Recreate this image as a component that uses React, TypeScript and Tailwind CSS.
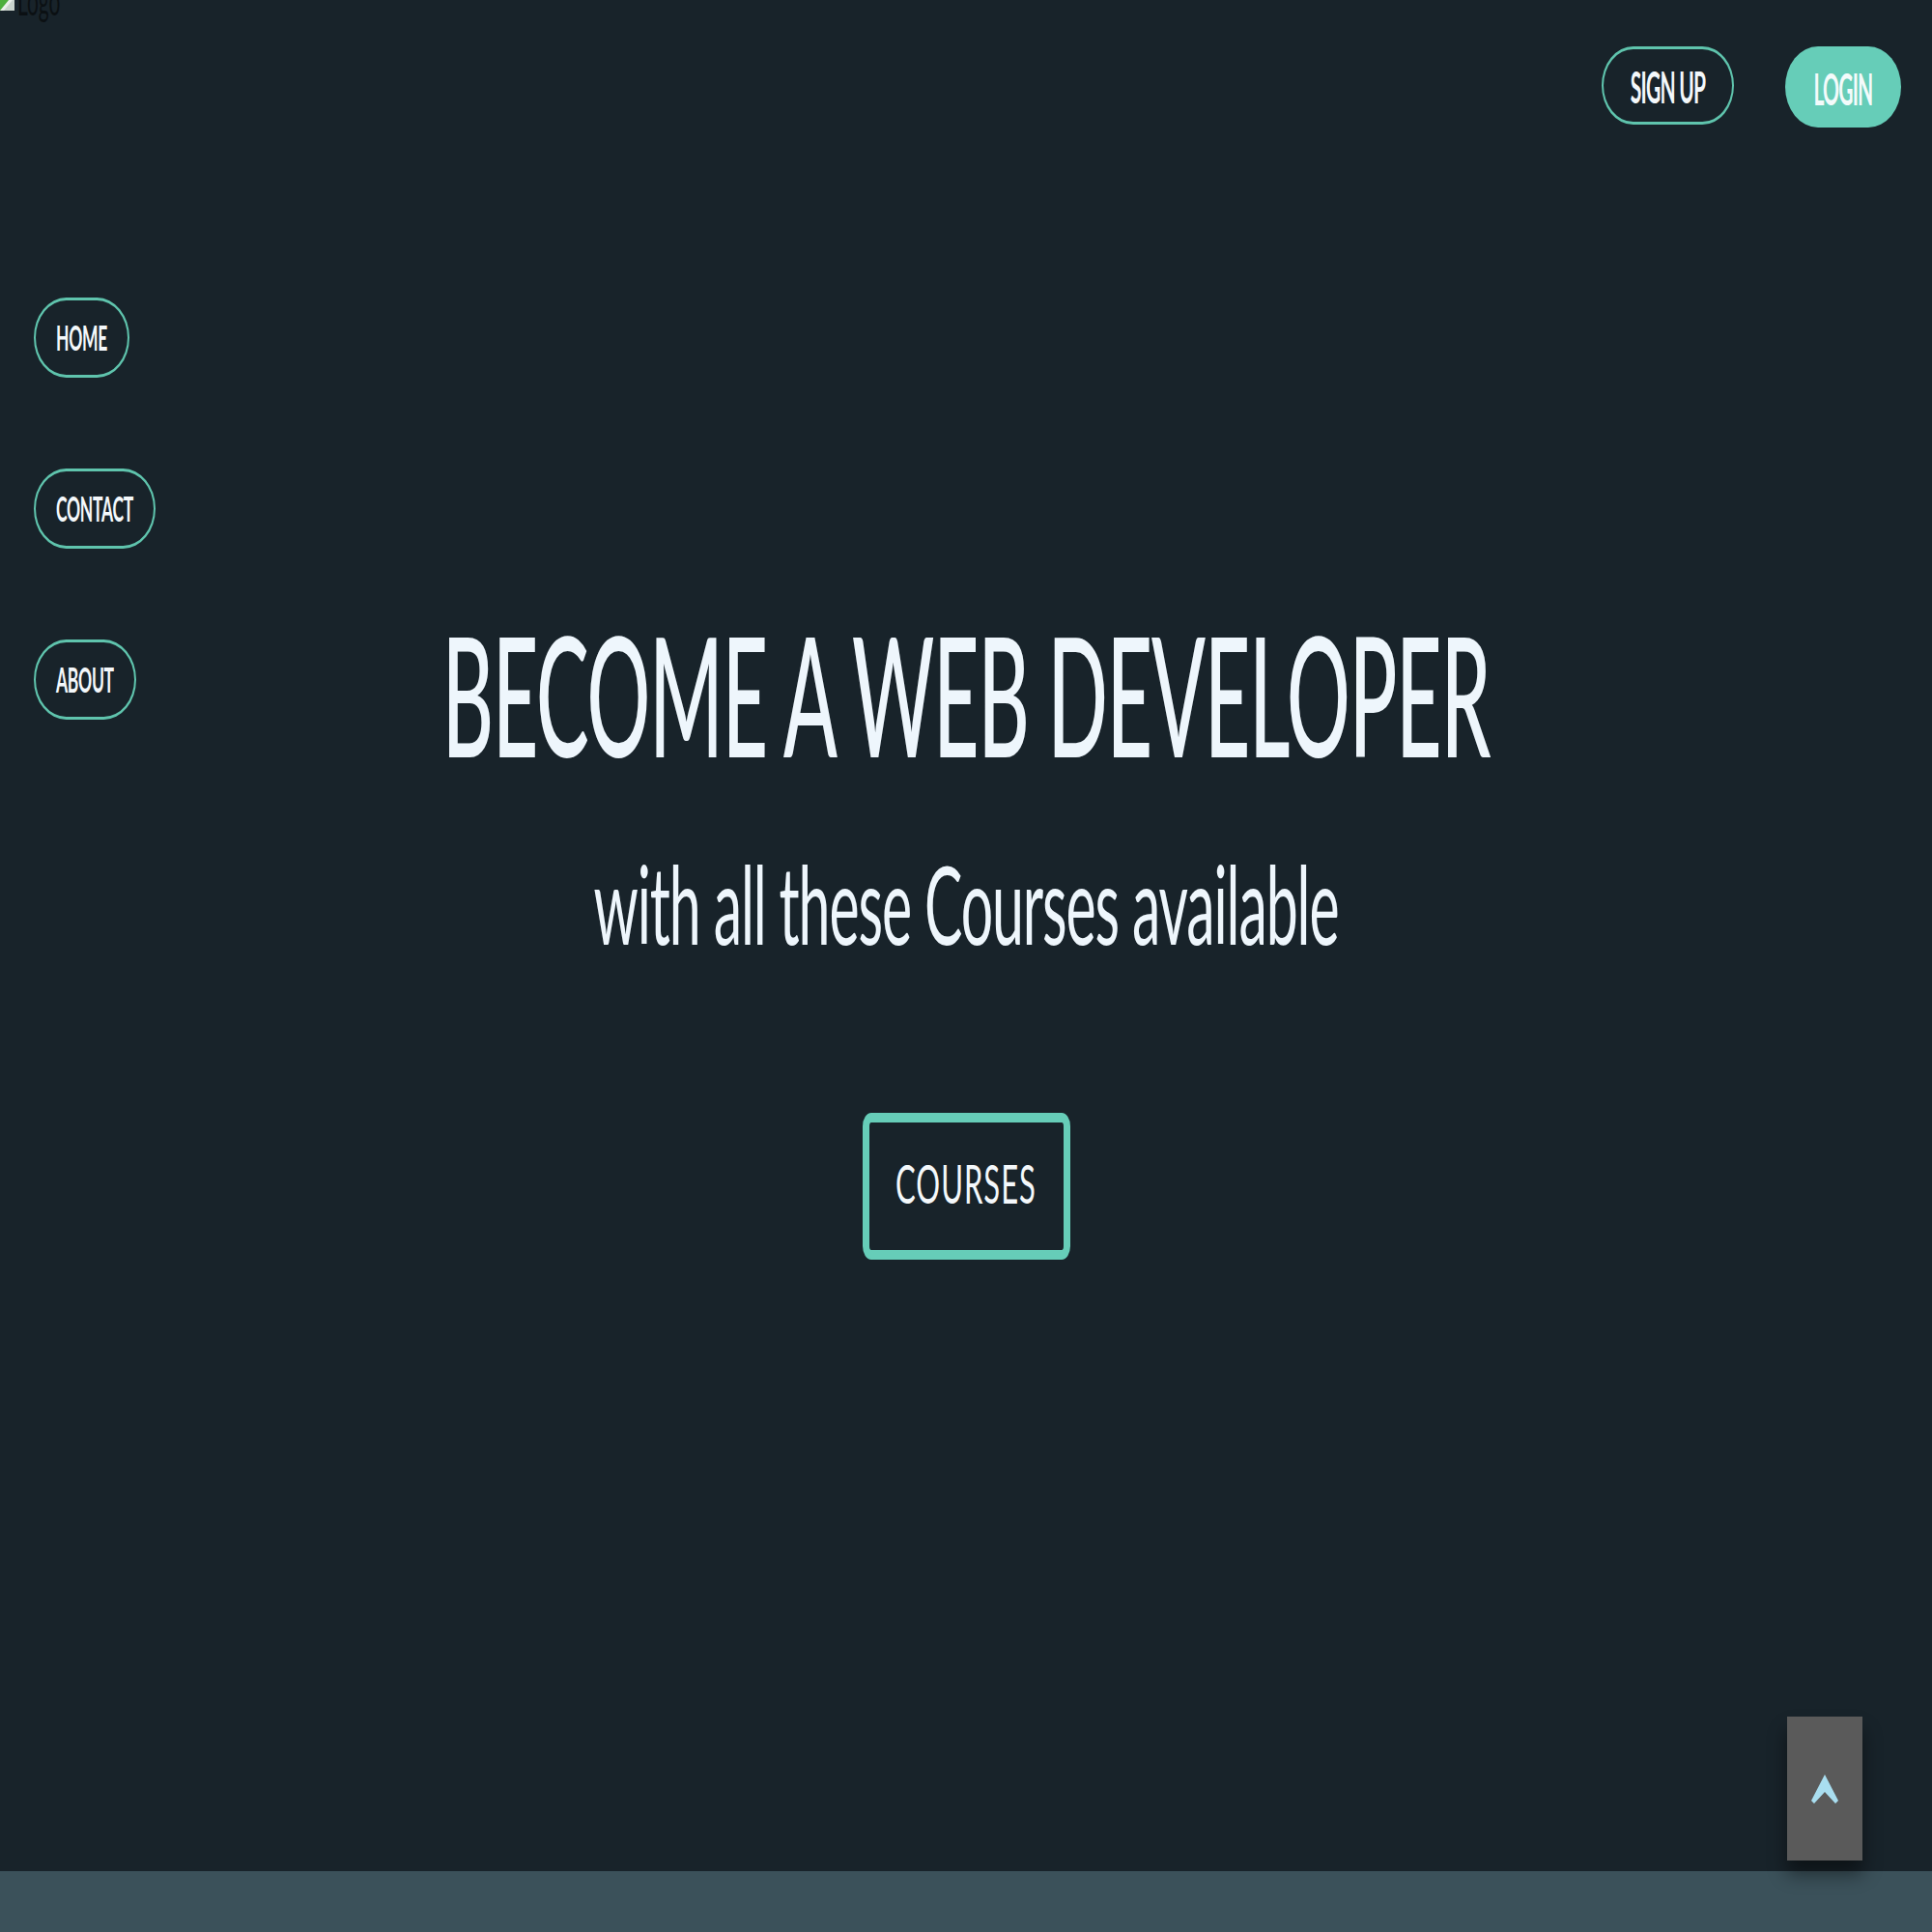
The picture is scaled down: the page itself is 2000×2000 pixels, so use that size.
import React from "react";

const navItems = ["HOME", "CONTACT", "ABOUT"];

const BrokenImage = () => (
  <svg width="15" height="11" viewBox="0 0 15 11" className="shrink-0">
    <rect x="0" y="0" width="15" height="11" fill="#e9efe9" />
    <path d="M0 11 L0 0 L9 0 Z" fill="#4caf3c" />
    <path d="M4 11 L13 0 L15 0 L15 11 Z" fill="#c9d3cc" />
  </svg>
);

const ArrowUp = () => (
  <svg width="28" height="30" viewBox="0 0 28 30">
    <path d="M14 0 L28 27 L25 30 L14 18 L3 30 L0 27 Z" fill="#a9def0" />
  </svg>
);

const NavButton = ({ label }: { label: string }) => (
  <a
    href="#"
    className="flex h-[83px] items-center rounded-[34px_/_42px] border-x-2 border-y-[3px] border-[#5fc4ad] px-[21px]"
  >
    <span className="inline-block scale-y-[2.1] text-[17.5px] font-bold leading-none tracking-[-0.3px] text-[#f4f8fb]">
      {label}
    </span>
  </a>
);

const App = () => {
  return (
    <div className="flex h-[2000px] w-full flex-col overflow-hidden bg-[#18232a] font-['Lato',sans-serif]">
      <div className="relative flex-1">
        <header className="flex items-start justify-between">
          <div className="flex items-start gap-[3px]">
            <BrokenImage />
            <span className="-mt-[12px] inline-block scale-y-[2] text-[21px] leading-none text-[#0b1013]">
              Logo
            </span>
          </div>
          <div className="mr-[32px] mt-[48px] flex items-start gap-[53px]">
            <button className="flex h-[81px] w-[137px] items-center justify-center rounded-[34px_/_42px] border-x-2 border-y-[3px] border-[#5fc4ad]">
              <span className="inline-block scale-y-[2.2] text-[21px] font-bold leading-none tracking-[-0.8px] text-[#f4f8fb]">
                SIGN UP
              </span>
            </button>
            <button className="flex h-[84px] w-[120px] items-center justify-center rounded-[34px_/_42px] bg-[#66cdb8]">
              <span className="inline-block scale-y-[2.2] text-[21px] font-bold leading-none tracking-[-0.8px] text-[#f4fbfb]">
                LOGIN
              </span>
            </button>
          </div>
        </header>

        <div className="grid grid-cols-[1fr_auto_1fr]">
          <nav className="ml-[35px] mt-[176px] flex flex-col items-start gap-[94px]">
            {navItems.map((item) => (
              <NavButton key={item} label={item} />
            ))}
          </nav>

          <section className="mt-[523px] flex flex-col items-center">
            <h1 className="flex h-[123px] items-center justify-center">
              <span className="inline-block scale-y-[2.09] text-[82px] font-medium leading-none tracking-[-1px] text-[#eef6fc]">
                BECOME A WEB DEVELOPER
              </span>
            </h1>
            <p className="mt-[113px] flex h-[87px] items-center justify-center">
              <span className="inline-block scale-y-[1.92] text-[59px] font-normal leading-none tracking-[-1.1px] text-[#eef6fc]">
                with all these Courses available
              </span>
            </p>
            <button className="mt-[174px] flex h-[152px] w-[215px] items-center justify-center rounded-[9px_/_14px] border-x-[7px] border-y-[10px] border-[#66cdb8] pb-[6px]">
              <span className="inline-block scale-y-[1.8] text-[31px] leading-none tracking-[1px] text-[#f4f8fb]">
                COURSES
              </span>
            </button>
          </section>

          <div />
        </div>

        <button className="absolute bottom-[11px] right-[72px] flex h-[149px] w-[78px] items-center justify-center bg-[#5a5a5a] shadow-[0_14px_18px_rgba(0,0,0,0.45)]">
          <ArrowUp />
        </button>
      </div>
      <div className="h-[63px] bg-[#3b515a]" />
    </div>
  );
};

export default App;
